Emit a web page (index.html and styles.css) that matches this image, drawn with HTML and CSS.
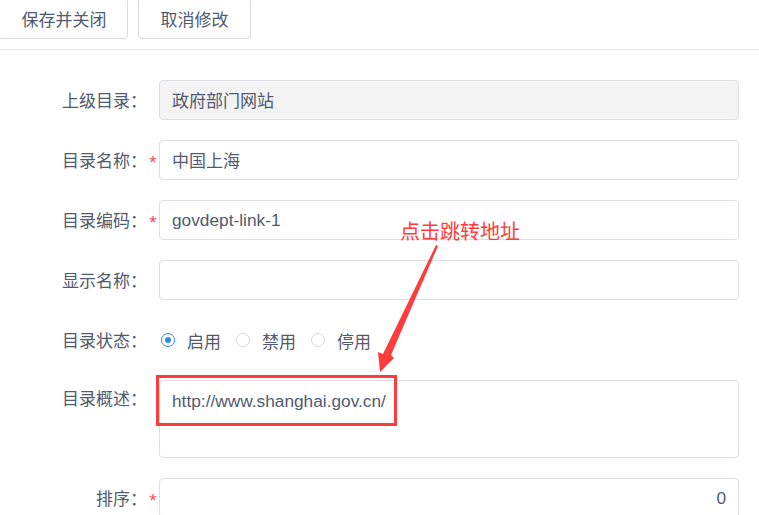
FILE: index.html
```html
<!DOCTYPE html>
<html lang="zh-CN">
<head>
<meta charset="utf-8">
<title>目录编辑</title>
<link rel="stylesheet" href="styles.css">
</head>
<body>
<div class="page">
  <div class="toolbar">
    <button class="btn btn-first">保存并关闭</button>
    <button class="btn">取消修改</button>
  </div>
  <form class="form">
    <div class="row">
      <label class="label">上级目录：</label><span class="star"></span>
      <div class="input disabled">政府部门网站</div>
    </div>
    <div class="row">
      <label class="label">目录名称：</label><span class="star">*</span>
      <div class="input">中国上海</div>
    </div>
    <div class="row">
      <label class="label">目录编码：</label><span class="star">*</span>
      <div class="input latin">govdept-link-1</div>
    </div>
    <div class="row">
      <label class="label">显示名称：</label><span class="star"></span>
      <div class="input"></div>
    </div>
    <div class="row">
      <label class="label">目录状态：</label><span class="star"></span>
      <div class="radios">
        <span class="radio"><span class="dot checked"></span>启用</span>
        <span class="radio"><span class="dot"></span>禁用</span>
        <span class="radio"><span class="dot"></span>停用</span>
      </div>
    </div>
    <div class="row row-tall">
      <label class="label">目录概述：</label><span class="star"></span>
      <div class="textarea latin">http://www.shanghai.gov.cn/</div>
    </div>
    <div class="row">
      <label class="label">排序：</label><span class="star">*</span>
      <div class="input num latin">0</div>
    </div>
  </form>
  <div class="note">点击跳转地址</div>
  <svg class="arrow" width="759" height="515" viewBox="0 0 759 515">
    <polygon points="436,247 438,248 391,357 394,360 380,374 378,354 383,356" fill="#ff3b3b"/>
  </svg>
  <div class="highlight"></div>
</div>
</body>
</html>
```
FILE: styles.css
```css
* { box-sizing: border-box; }
html, body { margin: 0; padding: 0; background: #fff; }
body {
  font-family: "Noto Sans CJK SC", "Microsoft YaHei", sans-serif;
  font-size: 17px;
  color: #515a6e;
  width: 759px;
  height: 515px;
  overflow: hidden;
}
.page { position: relative; width: 759px; height: 515px; }
.toolbar {
  display: flex;
  gap: 10px;
  height: 52px;
  margin-top: -2px;
  border-bottom: 1px solid #e8eaec;
}
.btn {
  height: 41px;
  padding: 0;
  font-family: inherit;
  font-size: 17px;
  color: #515a6e;
  background: #fff;
  border: 1px solid #d7dade;
  border-radius: 4px;
  line-height: 39px;
  text-align: center;
}
.btn-first { margin-left: -2px; width: 130px; padding-left: 2px; }
.btn + .btn { width: 113px; }
.form {
  padding-top: 30px;
  display: flex;
  flex-direction: column;
  gap: 20px;
}
.row { display: flex; align-items: center; height: 40px; }
.row-tall { height: 78px; align-items: flex-start; }
.row-tall .label { line-height: 36px; }
.label {
  width: 147px;
  text-align: right;
  line-height: 40px;
  white-space: nowrap;
}
.star {
  width: 12px;
  color: #f5505f;
  font-size: 19px;
  text-align: center;
  padding-top: 5px;
  font-family: "Liberation Sans", sans-serif;
}
.input, .textarea {
  width: 580px;
  border: 1px solid #dcdee2;
  border-radius: 4px;
  padding: 0 12px;
  color: #515a6e;
  background: #fff;
}
.input { height: 40px; line-height: 38px; }
.textarea { height: 78px; line-height: 22px; padding-top: 9px; }
.disabled { background: #f3f3f3; }
.latin { font-family: "Liberation Sans", Arial, sans-serif; font-size: 17.3px; }
.num { text-align: right; }
.radios { display: flex; align-items: center; padding-left: 2px; }
.radio { display: flex; align-items: center; margin-right: 15px; }
.dot {
  width: 14px;
  height: 14px;
  border: 1px solid #d4d7dc;
  border-radius: 50%;
  margin-right: 12px;
  position: relative;
  background: #fff;
}
.dot.checked { border-color: #2d8cf0; }
.dot.checked::after {
  content: "";
  position: absolute;
  left: 3px; top: 3px;
  width: 6px; height: 6px;
  border-radius: 50%;
  background: #2d8cf0;
}
.note {
  position: absolute;
  left: 400px;
  top: 219px;
  font-size: 20px;
  line-height: 28px;
  color: #ff3b3b;
}
.arrow { position: absolute; left: 0; top: 0; pointer-events: none; }
.highlight {
  position: absolute;
  left: 156px;
  top: 377px;
  width: 241px;
  height: 51px;
  border: 3px solid #ff3b3b;
}
```
